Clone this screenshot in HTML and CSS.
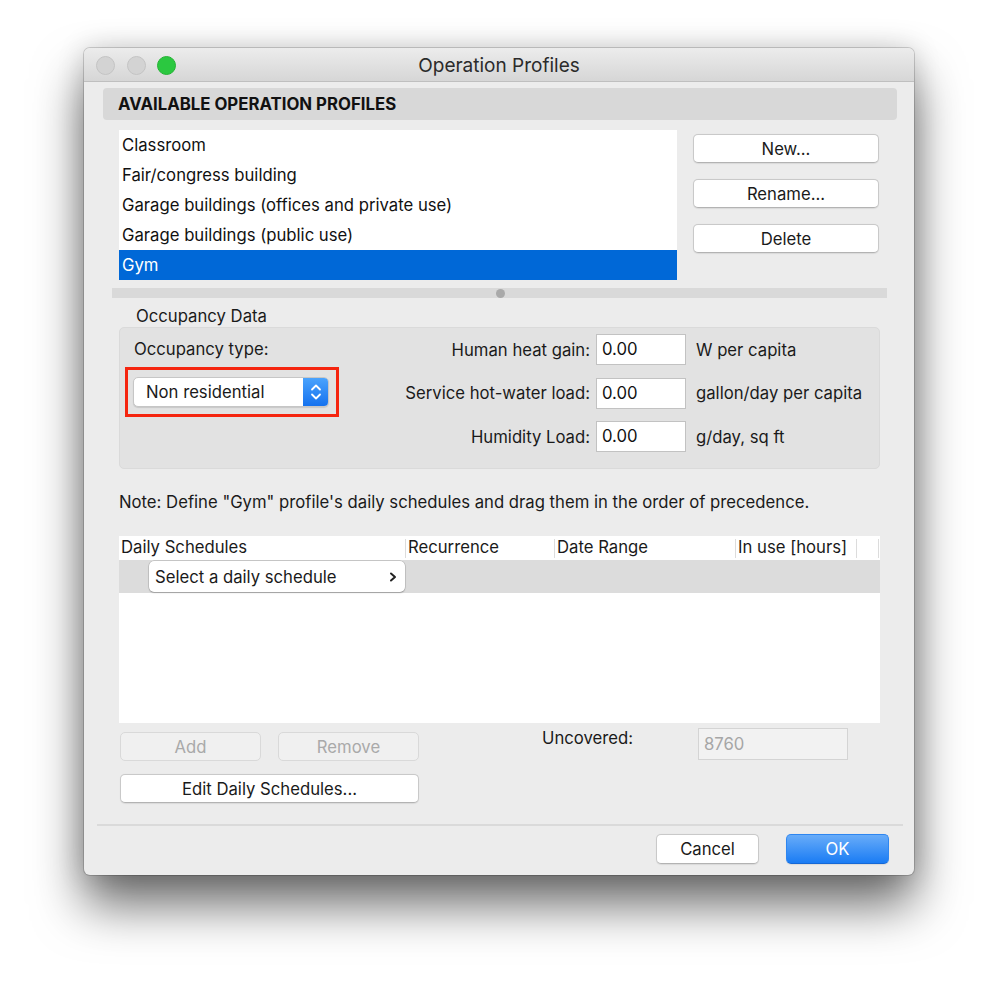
FILE: index.html
```html
<!DOCTYPE html>
<html lang="en">
<head>
<meta charset="utf-8">
<title>Operation Profiles</title>
<link rel="stylesheet" href="styles.css">
</head>
<body>
<div class="window">
  <div class="titlebar">
    <div class="lights">
      <span class="light light-gray"></span>
      <span class="light light-gray"></span>
      <span class="light light-green"></span>
    </div>
    <div class="title">Operation Profiles</div>
    <div></div>
  </div>

  <div class="content">
    <div class="section-header">AVAILABLE OPERATION PROFILES</div>

    <div class="profiles">
      <ul class="profile-list">
        <li>Classroom</li>
        <li>Fair/congress building</li>
        <li>Garage buildings (offices and private use)</li>
        <li>Garage buildings (public use)</li>
        <li class="selected">Gym</li>
      </ul>
      <div class="profile-actions">
        <button class="btn">New...</button>
        <button class="btn">Rename...</button>
        <button class="btn">Delete</button>
      </div>
    </div>

    <div class="splitter"><span class="splitter-knob"></span></div>

    <div class="group-title">Occupancy Data</div>
    <div class="group">
      <div class="occ-label">Occupancy type:</div>
      <div class="occ-select">
        <div class="select">
          <span class="select-text">Non residential</span>
          <span class="stepper">
            <svg width="14" height="22" viewBox="0 0 14 22"><path d="M3 8.5 L7 4.5 L11 8.5 M3 13.5 L7 17.5 L11 13.5" fill="none" stroke="#fff" stroke-width="1.8" stroke-linecap="round" stroke-linejoin="round"/></svg>
          </span>
        </div>
      </div>

      <div class="fields">
        <span class="field-label">Human heat gain:</span>
        <span class="input">0.00</span>
        <span class="unit">W per capita</span>
        <span class="field-label">Service hot-water load:</span>
        <span class="input">0.00</span>
        <span class="unit">gallon/day per capita</span>
        <span class="field-label">Humidity Load:</span>
        <span class="input">0.00</span>
        <span class="unit">g/day, sq ft</span>
      </div>
    </div>

    <p class="note">Note: Define "Gym" profile's daily schedules and drag them in the order of precedence.</p>

    <div class="table">
      <div class="thead">
        <div class="th th-sched">Daily Schedules</div>
        <div class="th th-rec">Recurrence</div>
        <div class="th th-date">Date Range</div>
        <div class="th th-use">In use [hours]</div>
        <div class="th th-extra"></div>
      </div>
      <div class="trow">
        <div class="popup">
          <span>Select a daily schedule</span>
          <svg width="10" height="12" viewBox="0 0 10 12"><path d="M3 2.5 L7 6 L3 9.5" fill="none" stroke="#222" stroke-width="2" stroke-linecap="round" stroke-linejoin="round"/></svg>
        </div>
      </div>
      <div class="tbody"></div>
    </div>

    <div class="bottom">
      <div class="bottom-left">
        <div class="btn-row">
          <button class="btn btn-disabled btn-half">Add</button>
          <button class="btn btn-disabled btn-half">Remove</button>
        </div>
        <button class="btn btn-wide">Edit Daily Schedules...</button>
      </div>
      <div class="uncovered-label">Uncovered:</div>
      <div class="input input-disabled">8760</div>
    </div>

    <div class="separator"></div>

    <div class="footer">
      <button class="btn btn-footer">Cancel</button>
      <button class="btn btn-footer btn-primary">OK</button>
    </div>
  </div>
</div>
</body>
</html>
```

FILE: styles.css
```css
* { box-sizing: border-box; }

html, body {
  margin: 0;
  padding: 0;
  background: #ffffff;
}

body {
  font-family: Inter, "Noto Sans", "Liberation Sans", sans-serif;
  font-size: 16.7px;
  color: #1a1a1a;
  padding-top: 48px;
  padding-left: 84px;
  min-height: 996px;
}

.window {
  width: 830px;
  height: 827px;
  background: #ececec;
  border-radius: 6px;
  box-shadow: 0 0 0 1px rgba(0,0,0,0.16), 0 30px 50px rgba(0,0,0,0.58), 0 0 28px rgba(0,0,0,0.16);
  overflow: hidden;
}

/* Title bar */
.titlebar {
  height: 34px;
  display: grid;
  grid-template-columns: 1fr auto 1fr;
  align-items: center;
  background: linear-gradient(#ececec, #d6d6d6);
  border-bottom: 1px solid #bfbfbf;
}

.lights {
  display: flex;
  gap: 11.5px;
  padding-left: 12px;
  padding-top: 1px;
}

.light {
  width: 19px;
  height: 19px;
  border-radius: 50%;
}

.light-gray {
  background: #d3d3d3;
  border: 1px solid #c4c4c4;
}

.light-green {
  background: #2bc840;
  border: 1px solid #24b334;
}

.title {
  font-size: 19px;
  color: #2b2b2b;
  padding-top: 1px;
}

/* Content */
.content {
  display: flex;
  flex-direction: column;
}

.section-header {
  margin: 6px 17px 0 19px;
  height: 32px;
  line-height: 33px;
  background: #d8d8d8;
  border-radius: 4px;
  padding-left: 15px;
  font-weight: 700;
  font-size: 16.8px;
  color: #111;
}

.profiles {
  display: flex;
  margin-top: 10px;
  padding-left: 35px;
}

.profile-list {
  list-style: none;
  margin: 0;
  padding: 0;
  width: 558px;
  height: 150px;
  background: #fff;
}

.profile-list li {
  height: 30px;
  line-height: 30px;
  padding-left: 3px;
  color: #111;
}

.profile-list li.selected {
  background: #0068d7;
  color: #fff;
}

.profile-actions {
  display: flex;
  flex-direction: column;
  gap: 16px;
  margin-left: 16px;
  padding-top: 4px;
}

.btn {
  font-family: inherit;
  font-size: 16.7px;
  color: #1a1a1a;
  background: #fff;
  border: 1px solid #c9c9c9;
  border-bottom-color: #b3b3b3;
  border-radius: 5px;
  box-shadow: 0 0.5px 1px rgba(0,0,0,0.08);
  height: 29px;
  padding: 0;
  margin: 0;
  cursor: default;
}

.profile-actions .btn {
  width: 186px;
}

/* Splitter */
.splitter {
  margin: 8px 27px 0 28px;
  height: 10px;
  background: #d9d9d9;
  display: flex;
  justify-content: center;
  align-items: center;
}

.splitter-knob {
  width: 9px;
  height: 9px;
  border-radius: 50%;
  background: #a9a9a9;
  margin-left: 2px;
}

/* Occupancy group */
.group-title {
  margin-top: 7px;
  padding-left: 52px;
  height: 22px;
  line-height: 22px;
}

.group {
  margin: 0 34px 0 35px;
  height: 142px;
  background: #e2e2e2;
  border: 1px solid #dadada;
  border-radius: 5px;
  display: grid;
  grid-template-columns: 246px 1fr;
  grid-template-rows: 31px 31px;
  row-gap: 12px;
  padding: 6px 0 0 14px;
}

.occ-label {
  grid-column: 1;
  grid-row: 1;
  line-height: 31px;
}

.occ-select {
  grid-column: 1;
  grid-row: 2;
  position: relative;
  width: 196px;
  margin-left: -1px;
}

.occ-select::after {
  content: "";
  position: absolute;
  left: -8px;
  top: -10px;
  right: -10px;
  bottom: -9px;
  border: 3px solid #f5250f;
  pointer-events: none;
}

.select {
  height: 30px;
  display: flex;
  align-items: stretch;
  background: #fff;
  border: 1px solid #c6c6c6;
  border-radius: 5px;
  box-shadow: 0 1px 1px rgba(0,0,0,0.12);
  overflow: hidden;
}

.select-text {
  flex: 1;
  line-height: 28px;
  padding-left: 12px;
}

.stepper {
  width: 25px;
  background: linear-gradient(#4aa3fd, #1572ef);
  display: flex;
  align-items: center;
  justify-content: center;
}

.fields {
  grid-column: 2;
  grid-row: 1 / span 2;
  display: grid;
  grid-template-columns: 216px 90px auto;
  grid-auto-rows: 31px;
  row-gap: 12.5px;
  column-gap: 0;
  align-items: center;
}

.field-label {
  text-align: right;
  padding-right: 6px;
}

.input {
  height: 31px;
  line-height: 29px;
  background: #fff;
  border: 1px solid #c2c2c2;
  padding-left: 5px;
  color: #111;
}

.unit {
  padding-left: 10px;
  white-space: nowrap;
}

.note {
  margin: 22px 0 0 35px;
  height: 22px;
  line-height: 22px;
}

/* Table */
.table {
  margin: 23px 34px 0 35px;
  height: 187px;
  background: #fff;
  display: flex;
  flex-direction: column;
}

.thead {
  height: 24px;
  display: flex;
  background: #fff;
}

.th {
  line-height: 22px;
  padding-left: 2px;
  border-right: 1px solid #dcdcdc;
  height: 19px;
  margin-top: 3px;
  white-space: nowrap;
}

.th-sched { width: 286px; margin-top: 0; height: 22px; border-right: none; }
.th-rec { width: 150px; border-left: 1px solid #dcdcdc; }
.th-date { width: 181px; }
.th-use { width: 121px; }
.th-extra { width: 22px; }

.th-rec, .th-date, .th-use { line-height: 16px; }

.trow {
  height: 33px;
  background: #dcdcdc;
  padding: 1px 0 0 30px;
}

.popup {
  width: 256px;
  height: 31px;
  background: #fff;
  border-radius: 5px;
  box-shadow: 0 0 0 0.5px rgba(0,0,0,0.2), 0 1px 1.5px rgba(0,0,0,0.2);
  display: flex;
  align-items: center;
  justify-content: space-between;
  padding: 0 7px 0 6px;
}

.tbody {
  flex: 1;
}

/* Bottom controls */
.bottom {
  display: flex;
  align-items: flex-start;
  padding-left: 36px;
}

.bottom-left {
  display: flex;
  flex-direction: column;
  gap: 13px;
  padding-top: 9px;
  width: 299px;
}

.btn-row {
  display: flex;
  gap: 17px;
}

.btn-half {
  width: 141px;
}

.btn-disabled {
  background: #f0f0f0;
  color: #a9a9a9;
  border-color: #d9d9d9;
  box-shadow: none;
}

.btn-wide {
  width: 299px;
}

.uncovered-label {
  margin-left: 123px;
  margin-top: 5px;
  line-height: 20px;
  width: 156px;
}

.input-disabled {
  margin-top: 5px;
  width: 150px;
  height: 32px;
  line-height: 30px;
  background: #f2f2f2;
  border: 1px solid #d4d4d4;
  color: #a6a6a6;
}

.separator {
  margin: 21px 11px 0 13px;
  height: 2px;
  background: #dadada;
}

.footer {
  display: flex;
  justify-content: flex-end;
  gap: 27px;
  padding-right: 25px;
  margin-top: 8px;
}

.btn-footer {
  height: 30px;
  width: 103px;
}

.btn-primary {
  background: linear-gradient(#68acf9, #1a7cf4);
  border: 1px solid #2e86f0;
  border-bottom-color: #1568d6;
  color: #fff;
}
```
